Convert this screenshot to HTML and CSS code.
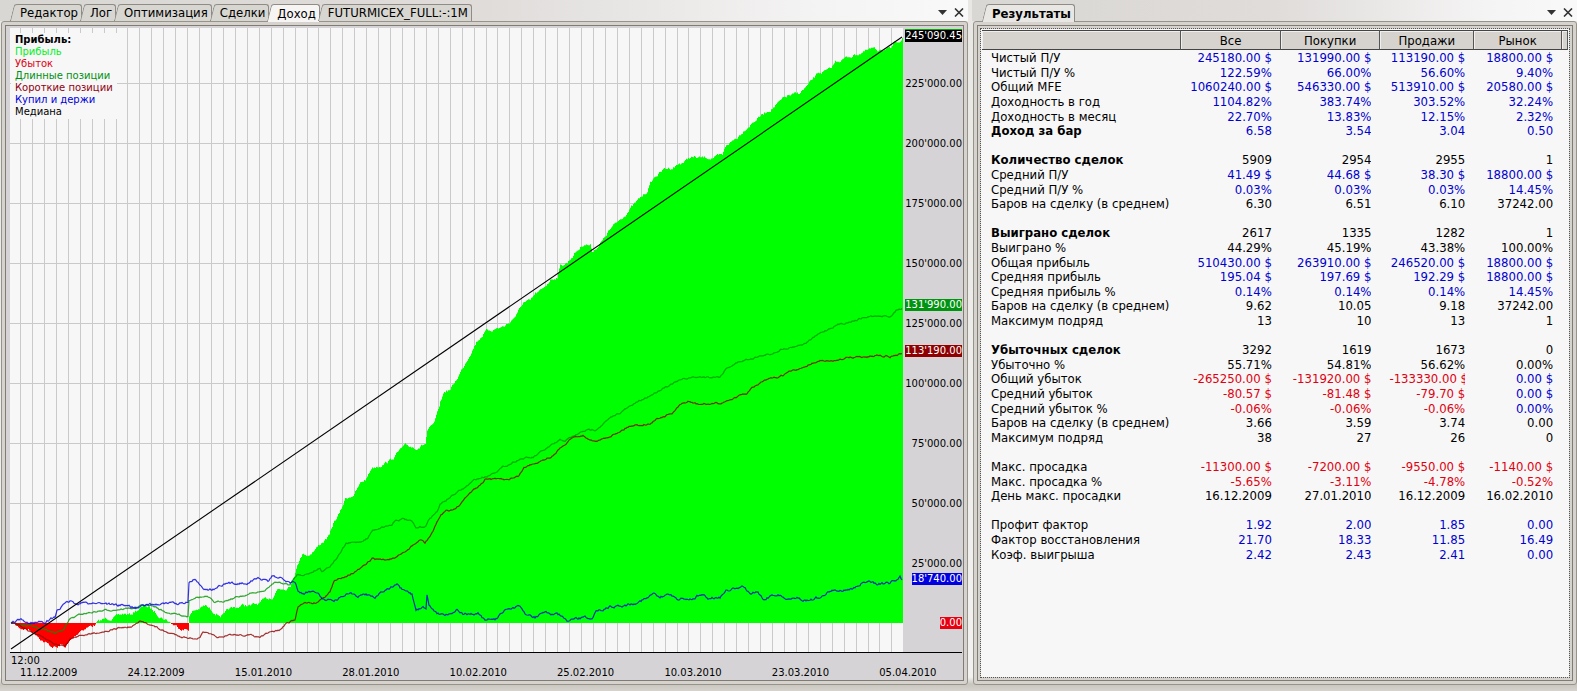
FILE: index.html
```
<!DOCTYPE html>
<html lang="ru">
  <head>
    <meta charset="UTF-8" />
    <meta name="viewport" content="width=device-width, initial-scale=1.0" />
    <title>FUTURMICEX_FULL</title>
    <link rel="stylesheet" href="styles.css">
  </head>
  <body>
    <main>
      <section class="panel">
        <header class="bar">
          <nav class="tabs">
            <button class="tab">Редактор</button>
            <button class="tab">Лог</button>
            <button class="tab">Оптимизация</button>
            <button class="tab">Сделки</button>
            <button class="tab active">Доход</button>
            <button class="tab">FUTURMICEX_FULL:-:1M</button>
          </nav>
          <div class="controls">
            <button aria-label="Меню"><svg width="9" height="5"><path d="M0 0h9L4.5 5z" fill="#333" /></svg></button>
            <button aria-label="Закрыть"><svg width="10" height="9"><path d="M1 0.5l8 8M9 0.5l-8 8" stroke="#333" stroke-width="1.6" /></svg></button>
          </div>
        </header>
        <div class="frame">
          <div class="chart">
            <div class="plot">
              <svg id="plot" viewBox="10 28 893 623" preserveAspectRatio="none"></svg>
              <ul class="legend">
                <li class="title">Прибыль:</li>
                <li class="profit">Прибыль</li>
                <li class="loss">Убыток</li>
                <li class="long">Длинные позиции</li>
                <li class="short">Короткие позиции</li>
                <li class="hold">Купил и держи</li>
                <li>Медиана</li>
              </ul>
            </div>
            <div class="prices" id="prices"></div>
            <div class="dates" id="dates"><span class="time">12:00</span></div>
            <div class="corner"></div>
          </div>
        </div>
      </section>
      <section class="panel">
        <header class="bar">
          <nav class="tabs">
            <button class="tab result">Результаты</button>
          </nav>
          <div class="controls">
            <button aria-label="Меню"><svg width="9" height="5"><path d="M0 0h9L4.5 5z" fill="#333" /></svg></button>
            <button aria-label="Закрыть"><svg width="10" height="9"><path d="M1 0.5l8 8M9 0.5l-8 8" stroke="#333" stroke-width="1.6" /></svg></button>
          </div>
        </header>
        <div class="frame">
          <div class="results">
            <table>
              <colgroup>
                <col class="c-name"><col class="c-all"><col class="c-buy"><col class="c-sell"><col class="c-market"><col class="c-end">
              </colgroup>
              <thead>
                <tr><th></th><th>Все</th><th>Покупки</th><th>Продажи</th><th>Рынок</th><th></th></tr>
              </thead>
              <tbody id="rows"></tbody>
            </table>
          </div>
        </div>
      </section>
    </main>
    <script src="script.js"></script>
  </body>
</html>
```
FILE: styles.css
```
* {
  box-sizing: border-box;
}
body {
  margin: 0;
  background-color: #d6d3ce;
  color: black;
  font-family: "DejaVu Sans Condensed", "DejaVu Sans", sans-serif;
  font-size: 13px;
  font-stretch: condensed;
}
main {
  height: 100vh;
  display: grid;
  grid-template-columns: 8fr 5fr;
  gap: 4px;
  padding-bottom: 6px;
  background: linear-gradient(#e9e7e4, #f3f1ef 98%, #c8c5be 99%, #d6d3ce);
}
ul {
  list-style: none;
  margin: 0;
  padding: 0;
}
button {
  border: 0;
  margin: 0;
  background: none;
  color: inherit;
  font: inherit;
}
.panel {
  display: flex;
  flex-direction: column;
  min-width: 0;
  min-height: 0;
}
.bar {
  height: 21px;
  display: flex;
  justify-content: space-between;
  align-items: flex-end;
  background: linear-gradient(90deg, #d9d7d3, #dfdcda 50%, #f5f4f4 85%, #f9f9f9);
}
.tabs {
  display: flex;
  padding-left: 12px;
}
.tab {
  position: relative;
  z-index: 1;
  height: 17px;
  padding: 1px 4px 0 8px;
  line-height: 16px;
  white-space: nowrap;
  --tab-color: #d8d6d1;
  --tab-line: #8f8c86;
}
.tab::before,
.tab::after {
  content: "";
  position: absolute;
  z-index: -1;
  top: 0;
  bottom: 0;
  background-color: var(--tab-color);
  border-top: 1px solid var(--tab-line);
}
.tab::before {
  left: 0;
  width: 14px;
  border-left: 1px solid var(--tab-line);
  border-top-left-radius: 3px;
  transform: skewX(-14deg);
}
.tab::after {
  left: 9px;
  right: 0;
  border-right: 1px solid var(--tab-line);
  border-top-right-radius: 3px;
}
.active,
.result {
  --tab-color: #f6f5f4;
  height: 18px;
  margin-bottom: -1px;
}
.result {
  --tab-color: #e9e7e4;
  font-weight: bold;
}
.controls {
  display: flex;
  align-items: center;
  height: 18px;
  padding-right: 4px;
  gap: 7px;
}
.controls button {
  display: flex;
  padding: 0;
}
.frame {
  flex: 1;
  display: flex;
  min-height: 0;
  margin-left: 1px;
  padding: 3px;
  background-color: #d6d3ce;
  border: 1px solid #96938b;
  border-radius: 3px;
}
.chart,
.results {
  flex: 1;
  min-width: 0;
  border: 1px solid #807c74;
}
.chart {
  display: grid;
  grid-template-columns: 1fr 60px;
  grid-template-rows: 1fr 28px;
  padding: 2px 0 0 4px;
  background-color: #d5d3d5;
  font-family: "DejaVu Sans", sans-serif;
  font-size: 10px;
  font-stretch: normal;
}
.plot {
  position: relative;
  min-height: 0;
  background-color: #f7f7f7;
}
#plot {
  display: block;
  width: 100%;
  height: 100%;
}
#plot * {
  vector-effect: non-scaling-stroke;
}
.grid-line {
  stroke: #cacaca;
  shape-rendering: crispEdges;
}
.area-up {
  fill: #00ff00;
}
.area-down {
  fill: #ff0000;
}
.line {
  fill: none;
  stroke-width: 1.2;
  stroke-opacity: 0.8;
}
.line-long {
  stroke: #009400;
}
.line-short {
  stroke: #900000;
}
.line-hold {
  stroke: #0000e0;
}
.line-median {
  fill: none;
  stroke: black;
  stroke-width: 1.1;
}
.legend {
  position: absolute;
  left: 1px;
  top: 5px;
  padding: 1px 4px;
  line-height: 12px;
  background-color: #f7f7f7;
}
.title {
  font-weight: bold;
}
.profit {
  color: #00f020;
}
.loss {
  color: #e00010;
}
.long {
  color: #009010;
}
.short {
  color: #900010;
}
.hold {
  color: #0000d8;
}
.prices,
.dates {
  position: relative;
}
.price,
.tag {
  position: absolute;
  right: 1px;
  height: 12px;
  margin-top: -6px;
  line-height: 12px;
}
.tag {
  color: white;
}
.tag-total {
  background-color: black;
  box-shadow: 0 -1px #00b000;
}
.tag-long {
  background-color: #009410;
}
.tag-short {
  background-color: #900000;
}
.tag-hold {
  background-color: #0000e0;
}
.tag-loss {
  background-color: #e80010;
}
.dates,
.corner {
  border-top: 1px solid black;
}
.corner {
  margin-right: 1px;
}
.dates {
  padding: 2px 0 0 1px;
  line-height: 12px;
}
.date {
  position: absolute;
  top: 14px;
  white-space: nowrap;
}
.results {
  outline: 1px dotted #555;
  outline-offset: -4px;
  padding: 4px;
  background-color: #f7f7f7;
  box-shadow: inset 0 0 0 3px #d6d3ce;
}
table {
  width: 100%;
  height: 531px;
  table-layout: fixed;
  border-collapse: separate;
  border-spacing: 0;
}
.c-name {
  width: 34%;
}
.c-all,
.c-buy {
  width: 17%;
}
.c-sell {
  width: 16%;
}
.c-market {
  width: 15%;
}
th {
  height: 20px;
  padding: 0;
  line-height: 17px;
  font-weight: normal;
  background-color: #d6d3ce;
  border-top: 1px solid #444;
  border-right: 1px solid #555;
  border-bottom: 1px solid #444;
  box-shadow: inset 1px 1px #f0efed;
}
td {
  padding: 1px 9px 0;
  line-height: 13px;
  text-align: right;
  white-space: nowrap;
}
td:first-child {
  text-align: left;
}
td:last-child {
  padding: 0;
}
td span {
  display: block;
  height: 13px;
  overflow-x: clip;
}
.head td:first-child {
  font-weight: bold;
}
.plus {
  color: #0000d0;
}
.minus {
  color: #e00010;
}
```
FILE: script.js
```
// results table: [style, name, values...], style is one letter per value
// b - blue, r - red, k - black; leading "*" makes the name bold
const results = [
  ["bbbb", "Чистый П/У", "245180.00 $", "131990.00 $", "113190.00 $", "18800.00 $"],
  ["bbbb", "Чистый П/У %", "122.59%", "66.00%", "56.60%", "9.40%"],
  ["bbbb", "Общий MFE", "1060240.00 $", "546330.00 $", "513910.00 $", "20580.00 $"],
  ["bbbb", "Доходность в год", "1104.82%", "383.74%", "303.52%", "32.24%"],
  ["bbbb", "Доходность в месяц", "22.70%", "13.83%", "12.15%", "2.32%"],
  ["bbbb", "*Доход за бар", "6.58", "3.54", "3.04", "0.50"],
  null,
  ["kkkk", "*Количество сделок", "5909", "2954", "2955", "1"],
  ["bbbb", "Средний П/У", "41.49 $", "44.68 $", "38.30 $", "18800.00 $"],
  ["bbbb", "Средний П/У %", "0.03%", "0.03%", "0.03%", "14.45%"],
  ["kkkk", "Баров на сделку (в среднем)", "6.30", "6.51", "6.10", "37242.00"],
  null,
  ["kkkk", "*Выиграно сделок", "2617", "1335", "1282", "1"],
  ["kkkk", "Выиграно %", "44.29%", "45.19%", "43.38%", "100.00%"],
  ["bbbb", "Общая прибыль", "510430.00 $", "263910.00 $", "246520.00 $", "18800.00 $"],
  ["bbbb", "Средняя прибыль", "195.04 $", "197.69 $", "192.29 $", "18800.00 $"],
  ["bbbb", "Средняя прибыль %", "0.14%", "0.14%", "0.14%", "14.45%"],
  ["kkkk", "Баров на сделку (в среднем)", "9.62", "10.05", "9.18", "37242.00"],
  ["kkkk", "Максимум подряд", "13", "10", "13", "1"],
  null,
  ["kkkk", "*Убыточных сделок", "3292", "1619", "1673", "0"],
  ["kkkk", "Убыточно %", "55.71%", "54.81%", "56.62%", "0.00%"],
  ["rrrb", "Общий убыток", "-265250.00 $", "-131920.00 $", "-133330.00 $", "0.00 $"],
  ["rrrb", "Средний убыток", "-80.57 $", "-81.48 $", "-79.70 $", "0.00 $"],
  ["rrrb", "Средний убыток %", "-0.06%", "-0.06%", "-0.06%", "0.00%"],
  ["kkkk", "Баров на сделку (в среднем)", "3.66", "3.59", "3.74", "0.00"],
  ["kkkk", "Максимум подряд", "38", "27", "26", "0"],
  null,
  ["rrrr", "Макс. просадка", "-11300.00 $", "-7200.00 $", "-9550.00 $", "-1140.00 $"],
  ["rrrr", "Макс. просадка %", "-5.65%", "-3.11%", "-4.78%", "-0.52%"],
  ["kkkk", "День макс. просадки", "16.12.2009", "27.01.2010", "16.12.2009", "16.02.2010"],
  null,
  ["bbbb", "Профит фактор", "1.92", "2.00", "1.85", "0.00"],
  ["bbbb", "Фактор восстановления", "21.70", "18.33", "11.85", "16.49"],
  ["bbbb", "Коэф. выигрыша", "2.42", "2.43", "2.41", "0.00"],
];
const colors = { b: "plus", r: "minus", k: "" };

document.getElementById("rows").innerHTML = results
  .map((row) => {
    if (!row) return '<tr><td><span></span></td><td></td><td></td><td></td><td></td><td></td></tr>';
    const [style, name, ...values] = row;
    const cells = values.map((v, i) => `<td class="${colors[style[i]]}"><span>${v}</span></td>`).join("");
    const bold = name[0] === "*";
    return `<tr class="${bold ? "head" : ""}"><td><span>${bold ? name.slice(1) : name}</span></td>${cells}<td></td></tr>`;
  })
  .join("");

// chart series, x y pairs
const zero = 622;
const box = { x: 10, y: 28, w: 893, h: 623 };
const equity =
  "11 622 14 624 20 627 27 628 36 633 42 639 50 645 55 646 57 647 60 644 65 646 70 640 75 635 80 629 87 626 95 624 96 622 98 621 105 618 115 616 123 613 130 614 135 610 140 607 146 605 150 608 153 610 157 613 163 617 170 621 172 623 178 626 183 628 188 628 189 614 193 610 198 608 205 605 210 609 220 614 224 614 228 609 235 607 243 604 250 605 258 603 263 600 272 596 277 588 285 587 290 583 294 575 297 562 303 552 308 554 315 548 320 543 329 535 333 523 340 511 345 498 354 493 360 483 366 478 371 467 380 464 391 459 400 449 405 446 410 446 415 447 425 443 427 430 433 425 437 414 440 402 444 391 450 389 455 381 462 368 470 352 476 341 485 331 495 328 503 326 508 323 517 313 523 302 530 301 535 294 542 290 550 279 557 276 560 265 567 262 575 252 584 243 590 245 592 251 597 246 604 238 608 231 615 224 620 219 630 208 641 197 646 192 650 183 655 176 664 169 672 167 680 163 685 161 690 157 700 158 715 157 722 156 726 145 736 138 745 128 757 118 770 109 778 103 787 96 798 94 808 85 818 73 830 70 835 62 845 58 856 54 872 49 877 51 880 48 890 50 895 43 902 38";
const long =
  "11 622 20 624 35 626 45 629 55 632 62 629 66 624 70 618 82 613 100 610 120 608 135 607 145 604 155 606 165 611 180 614 188 615 189 599 195 596 207 596 215 602 230 598 245 594 265 590 275 581 290 584 297 574 308 573 320 567 322 570 330 565 340 553 346 543 360 541 368 537 372 530 382 526 392 524 395 519 404 518 412 521 416 528 426 525 430 517 437 511 440 504 452 495 465 487 475 479 488 475 500 468 510 463 520 458 533 457 545 449 560 440 565 440 585 430 595 429 607 420 620 412 635 403 645 398 655 392 665 386 680 380 690 377 720 376 727 367 740 361 757 356 770 354 780 349 805 343 820 333 835 325 850 321 860 318 870 316 890 316 897 309 902 308";
const short =
  "11 622 25 627 35 633 45 638 55 643 65 645 70 638 75 635 90 633 105 630 120 627 131 626 140 621 150 623 165 631 180 635 190 637 200 637 203 631 215 636 224 637 230 634 245 634 260 636 270 632 280 629 287 622 295 619 298 606 304 601 315 602 323 597 330 591 334 581 345 575 355 571 365 565 372 558 385 559 397 557 408 549 413 544 421 539 425 542 433 531 441 514 446 510 455 508 462 502 470 492 480 485 486 478 505 479 518 476 524 467 540 460 555 454 560 447 572 437 583 435 597 441 615 433 630 425 650 423 657 418 672 413 680 405 688 401 698 404 720 403 735 397 747 393 753 387 765 380 778 377 790 371 800 369 808 364 820 360 832 361 845 357 870 356 880 354 890 356 902 353";
const hold =
  "11 622 20 620 30 622 45 620 55 617 57 609 65 604 70 600 75 603 90 602 105 602 115 604 130 605 136 607 150 604 160 603 188 602 189 582 193 580 198 582 203 586 212 589 225 584 240 582 252 580 259 577 268 581 274 574 282 577 286 583 295 582 298 590 304 594 310 591 318 590 322 598 330 598 334 602 343 595 350 591 358 596 366 593 375 596 383 590 397 585 405 592 412 594 416 609 426 607 427 594 429 606 437 612 447 613 457 609 463 613 478 613 485 620 497 618 500 612 510 607 519 606 525 613 535 616 545 611 560 615 568 621 580 618 593 616 597 610 607 606 618 605 630 603 640 600 653 594 660 597 670 593 678 598 690 598 700 594 708 597 720 596 727 589 742 587 750 591 758 591 764 598 775 593 784 597 805 598 810 599 822 596 830 590 845 589 855 587 862 582 875 583 890 582 900 576 902 579";

let seed = 7;
function rand() {
  seed = (seed * 16807) % 2147483647;
  return seed / 2147483647 - 0.5;
}

// one point per bar with a little drifting noise between the given ones
function bars(text, noise) {
  const n = text.split(" ").map(Number);
  const points = [];
  let drift = 0;
  for (let i = 0; i < n.length - 2; i += 2) {
    const [x1, y1, x2, y2] = n.slice(i, i + 4);
    for (let x = x1; x < x2; x++) {
      drift = drift * 0.75 + rand() * noise;
      points.push([x, y1 + ((y2 - y1) * (x - x1)) / (x2 - x1) + drift]);
    }
  }
  points.push(n.slice(-2));
  return points;
}

function area(points, up) {
  let d = `M11 ${zero}`;
  points.forEach(([x, y]) => {
    const edge = up ? Math.min(y, zero) : Math.max(y, zero);
    d += `L${x} ${edge.toFixed(1)}L${x + 1} ${edge.toFixed(1)}`;
  });
  return d + `V${zero}Z`;
}

function line(text, noise, name) {
  const d = bars(text, noise).map(([x, y]) => `${x} ${y.toFixed(1)}`).join("L");
  return `<path class="line line-${name}" d="M${d}" />`;
}

const px = (x) => (((x - box.x) / box.w) * 100).toFixed(2);
const py = (y) => (((y - box.y) / box.h) * 100).toFixed(2);

let svg = "";
for (let i = 0; i < 74; i++) {
  const x = (20.5 + i * 11.936).toFixed(1);
  svg += `<path class="grid-line" d="M${x} 28V651" />`;
}
for (let i = 1; i < 10; i++) {
  const y = (zero - i * 59.85).toFixed(1);
  svg += `<path class="grid-line" d="M10 ${y}H903" />`;
}
const profit = bars(equity, 2.6);
svg += `<path class="area-up" d="${area(profit, true)}" />`;
svg += `<path class="area-down" d="${area(profit, false)}" />`;
svg += line(long, 1.4, "long");
svg += line(short, 1.4, "short");
svg += line(hold, 2.2, "hold");
svg += '<path class="line-median" d="M11 648L902 37" />';
document.getElementById("plot").innerHTML = svg;

let prices = "";
for (let i = 1; i < 10; i++) {
  prices += `<span class="price" style="top:${py(zero + 1 - i * 59.85)}%">${i * 25}'000.00</span>`;
}
[
  [36, "total", "245'090.45"],
  [305, "long", "131'990.00"],
  [350, "short", "113'190.00"],
  [578, "hold", "18'740.00"],
  [622, "loss", "0.00"],
].forEach(([y, name, text]) => {
  prices += `<span class="tag tag-${name}" style="top:${py(y)}%">${text}</span>`;
});
document.getElementById("prices").innerHTML = prices;

["11.12.2009", "24.12.2009", "15.01.2010", "28.01.2010", "10.02.2010", "25.02.2010", "10.03.2010", "23.03.2010", "05.04.2010"].forEach((date, i) => {
  document.getElementById("dates").insertAdjacentHTML("beforeend", `<span class="date" style="left:${px(20 + i * 107.4)}%">${date}</span>`);
});
```
